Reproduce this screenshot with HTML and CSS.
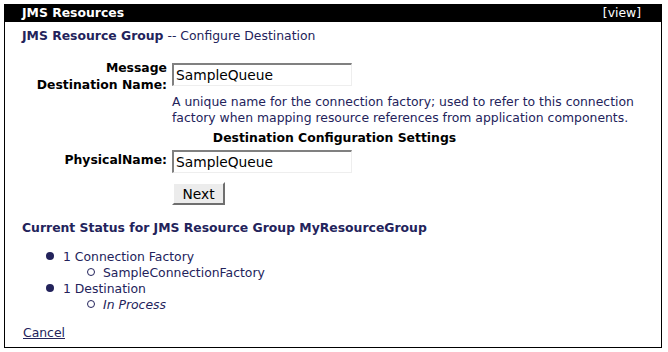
FILE: index.html
```html
<!DOCTYPE html>
<html lang="en">
<head>
    <meta charset="UTF-8">
    <title>JMS Resources</title>
    <link rel="stylesheet" href="styles.css">
</head>
<body>
    <div class="panel">
        <div class="panel-header">
            <span class="panel-title">JMS Resources</span>
            <span class="panel-view">[view]</span>
        </div>

        <div class="panel-body">
            <p class="page-title"><b>JMS Resource Group</b> -- Configure Destination</p>

            <form class="dest-form">
                <label class="field-label label-tall" for="destName">Message<br>Destination Name:</label>
                <input class="field-input input-top" type="text" id="destName" value="SampleQueue">

                <p class="field-help">A unique name for the connection factory; used to refer to this connection factory when mapping resource references from application components.</p>

                <h2 class="form-section">Destination Configuration Settings</h2>

                <label class="field-label" for="physName">PhysicalName:</label>
                <input class="field-input input-mid" type="text" id="physName" value="SampleQueue">

                <div class="form-actions">
                    <button type="button" class="btn">Next</button>
                </div>
            </form>

            <h3 class="status-title">Current Status for JMS Resource Group MyResourceGroup</h3>

            <ul class="status-list">
                <li>1 Connection Factory
                    <ul>
                        <li>SampleConnectionFactory</li>
                    </ul>
                </li>
                <li>1 Destination
                    <ul>
                        <li><i>In Process</i></li>
                    </ul>
                </li>
            </ul>

            <a class="cancel-link" href="#">Cancel</a>
        </div>
    </div>
</body>
</html>
```

FILE: styles.css
```css
body {
    margin: 0;
    font-family: "DejaVu Sans", Verdana, sans-serif;
    font-size: 12.4px;
    line-height: 16px;
    color: #23235b;
    background-color: #fff;
}

.panel {
    margin: 4px 0 0 4px;
    width: 656px;
    height: 343px;
    border: 1px solid #000;
    border-top: none;
}

.panel-header {
    display: flex;
    justify-content: space-between;
    height: 18px;
    line-height: 18px;
    background-color: #000;
    color: #fff;
    padding: 0 21px 0 17px;
    margin-left: -1px;
    margin-right: -1px;
}

.panel-title {
    font-weight: bold;
    padding-left: 1px;
}

.panel-body {
    padding: 0 14px 6px 17px;
}

.page-title {
    margin: 6px 0 0 0;
}

.dest-form {
    display: grid;
    grid-template-columns: 145px 1fr;
    column-gap: 5px;
    margin-top: 15px;
}

.field-label {
    grid-column: 1;
    text-align: right;
    font-weight: bold;
    color: #000;
    align-self: center;
}

.label-tall {
    line-height: 17px;
}

.field-input {
    grid-column: 2;
    width: 180px;
    height: 23px;
    box-sizing: border-box;
    padding: 0 2px;
    font-family: "DejaVu Sans", Verdana, sans-serif;
    font-size: 13.8px;
    color: #000;
    background-color: #fff;
    border: 1px solid #eee;
    border-top: 2px solid #808080;
    border-left: 2px solid #808080;
    outline: none;
}

.input-top {
    align-self: start;
    margin-top: 4px;
}

.input-mid {
    margin-top: 4px;
}

.field-help {
    grid-column: 2;
    margin: 1px 0 0 0;
}

.form-section {
    grid-column: 1 / 3;
    margin: 4px 0 0 0;
    text-align: center;
    font-size: 12.4px;
    color: #000;
}

.form-actions {
    grid-column: 2;
    margin-top: 9px;
}

.btn {
    width: 53px;
    height: 23px;
    padding: 0;
    font-family: "DejaVu Sans", Verdana, sans-serif;
    font-size: 13.8px;
    color: #000;
    background-color: #ececec;
    border: 2px solid;
    border-color: #fff #6f6f6f #6f6f6f #fff;
}

.status-title {
    margin: 15px 0 0 0;
    font-size: 12.4px;
}

.status-list {
    margin: 13px 0 0 0;
    padding-left: 41px;
    list-style: none;
}

.status-list ul {
    margin: 0;
    padding-left: 40px;
    list-style: none;
}

.status-list li::before {
    content: "";
    display: inline-block;
    width: 8px;
    height: 8px;
    border-radius: 50%;
    background-color: #23235b;
    margin-left: -17px;
    margin-right: 9px;
    vertical-align: 1px;
}

.status-list ul li::before {
    width: 6px;
    height: 6px;
    background-color: transparent;
    border: 1px solid #23235b;
    margin-left: -16px;
    margin-right: 8px;
}

.cancel-link {
    display: inline-block;
    margin-top: 12px;
    color: #23235b;
    padding-left: 1px;
}
```
